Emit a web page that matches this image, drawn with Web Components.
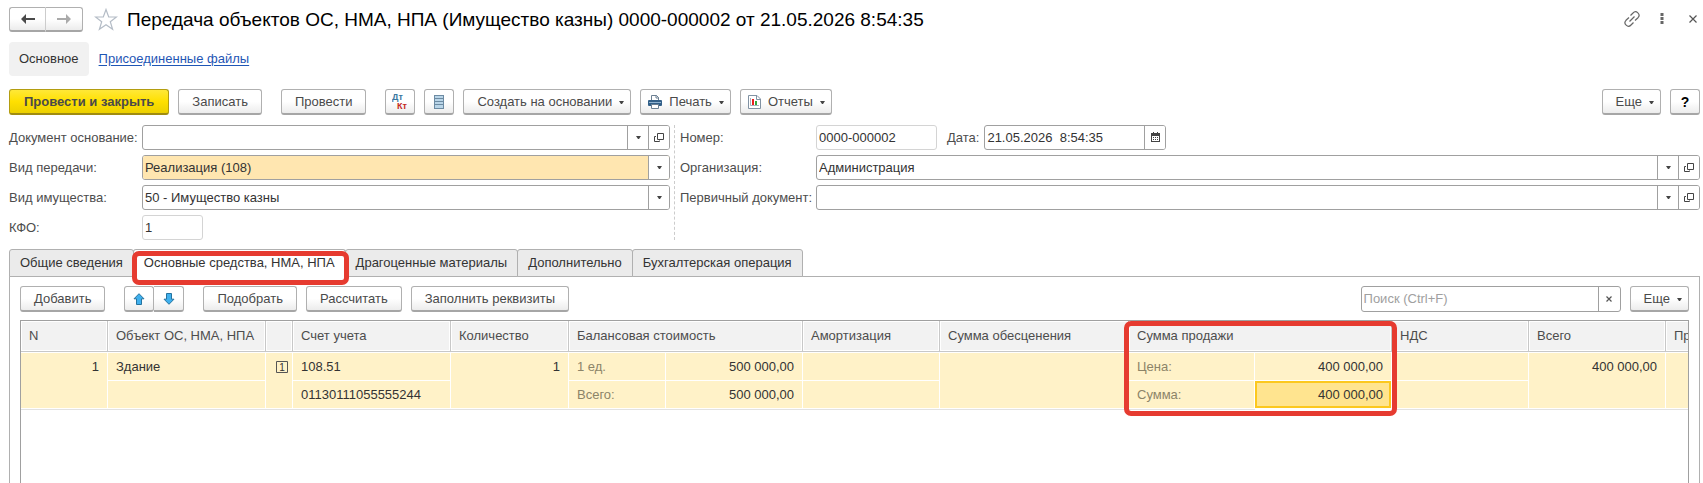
<!DOCTYPE html>
<html lang="ru">
<head>
<meta charset="utf-8">
<title>Передача объектов ОС, НМА, НПА</title>
<style>
  html, body {
    height: 100%;
    margin: 0;
  }
  body {
    overflow: hidden;
    background: #fff;
    color: #333;
    font: 13px/16px "Liberation Sans", Arial, sans-serif;
  }
  h1 {
    margin: 0;
    color: #000;
    font-size: 19px;
    line-height: 24px;
    font-weight: normal;
    white-space: nowrap;
  }
</style>
</head>
<body>
<doc-window>
  <doc-header slot="header"><h1>Передача объектов ОС, НМА, НПА (Имущество казны) 0000-000002 от 21.05.2026 8:54:35</h1></doc-header>
  <section-links slot="header"></section-links>

  <command-bar slot="header">
    <cmd-button look="main">Провести и закрыть</cmd-button>
    <cmd-button>Записать</cmd-button>
    <cmd-button apart>Провести</cmd-button>
    <cmd-button apart icon="dtkt" label="Проводки"></cmd-button>
    <cmd-button icon="list" label="Список"></cmd-button>
    <cmd-button menu>Создать на основании</cmd-button>
    <cmd-button icon="print" menu>Печать</cmd-button>
    <cmd-button icon="report" menu>Отчеты</cmd-button>
    <cmd-button slot="end" menu>Еще</cmd-button>
    <cmd-button slot="end" look="help">?</cmd-button>
  </command-bar>

  <field-columns slot="header">
    <form-field slot="left" label="Документ основание:" tools="arrow open"></form-field>
    <form-field slot="left" label="Вид передачи:" type="select" value="Реализация (108)" marked></form-field>
    <form-field slot="left" label="Вид имущества:" type="select" value="50 - Имущество казны"></form-field>
    <form-field slot="left" label="КФО:" value="1" size="small" readonly></form-field>
    <form-field slot="number" label="Номер:" value="0000-000002" size="medium" readonly></form-field>
    <form-field slot="number" label="Дата:" value="21.05.2026  8:54:35" size="date" tools="calendar"></form-field>
    <form-field slot="right" label="Организация:" value="Администрация" tools="arrow open"></form-field>
    <form-field slot="right" label="Первичный документ:" tools="arrow open"></form-field>
  </field-columns>

  <page-tabs>
    <command-bar>
      <cmd-button>Добавить</cmd-button>
      <move-buttons></move-buttons>
      <cmd-button apart>Подобрать</cmd-button>
      <cmd-button>Рассчитать</cmd-button>
      <cmd-button>Заполнить реквизиты</cmd-button>
      <search-box slot="end"></search-box>
      <cmd-button slot="end" menu>Еще</cmd-button>
    </command-bar>
    <asset-table></asset-table>
  </page-tabs>
</doc-window>

<script>
/*
*   Icons shared by the elements
*/
const icons = {
  back: '<svg width="14" height="10" viewBox="0 0 14 10"><path d="M0 5 5 0v4h9v2H5v4z" fill="#4a4a4a"/></svg>',
  forward: '<svg width="14" height="10" viewBox="0 0 14 10"><path d="M14 5 9 0v4H0v2h9v4z" fill="#aaa"/></svg>',
  star: '<svg width="24" height="23" viewBox="0 0 24 23"><path d="M12 1.5 14.7 9H22.5L16.3 13.7 18.6 21.3 12 16.7 5.4 21.3 7.7 13.7 1.5 9H9.3z" fill="none" stroke="#b4bcc6" stroke-width="1.2"/></svg>',
  link: '<svg width="16" height="16" viewBox="0 0 16 16" fill="none" stroke="#666" stroke-width="1.2"><path d="M6.500 4.500 9 2a3.300 3.300 0 0 1 5 4.700L11 9.500M9.500 11.500 7 14a3.300 3.300 0 0 1-5-4.700L5 6.500M5.500 10.500l5-5"/></svg>',
  dots: '<svg width="4" height="12" viewBox="0 0 4 12" fill="#666"><path d="M.5 0h3v3h-3zM.5 4h3v3h-3zM.5 8h3v3h-3z"/></svg>',
  close: '<svg width="8" height="8" viewBox="0 0 8 8"><path d="M.5.5l7 7M7.500.5l-7 7" stroke="#555" stroke-width="1.200"/></svg>',
  clear: '<svg width="6" height="6" viewBox="0 0 6 6"><path d="M.5.5l5 5M5.500.5l-5 5" stroke="#555" stroke-width="1.200"/></svg>',
  arrow: '<svg width="5" height="3" viewBox="0 0 5 3"><path d="M0 0h5L3 3H2z" fill="#444"/></svg>',
  open: '<svg width="10" height="10" viewBox="0 0 10 10"><path d="M3.500.5h6v6h-6zM2 3.500H.5v5h5V7.500" fill="none" stroke="#444"/></svg>',
  calendar: '<svg width="9" height="11" viewBox="0 0 9 11"><path d="M0 1h2V0h1v1h3V0h1v1h2v9H0z" fill="#444"/><path d="M1 4h7v5H1z" fill="#fff"/><path d="M2 5h1v1H2zM4 5h1v1H4zM6 5h1v1H6zM2 7h1v1H2zM4 7h1v1H4zM6 7h1v1H6z" fill="#444"/></svg>',
  list: '<svg width="10" height="14" viewBox="0 0 10 14"><path d="M0 0h10v14H0z" fill="#6d8ba3"/><path d="M1 1h8v2H1zM1 4h8v2H1zM1 7h8v2H1zM1 10h8v3H1z" fill="#b9d5e8"/></svg>',
  print: '<svg width="14" height="14" viewBox="0 0 14 14"><path d="M3.500 6V.5h5l2 2V6" fill="#fff" stroke="#6b7f92"/><path d="M8 0v3h3" fill="none" stroke="#6b7f92"/><rect y="5" width="14" height="6" rx="1" fill="#336089"/><path d="M1 7.500h12" stroke="#8fb2d0"/><path d="M3.500 9.500h7v4h-7z" fill="#fff" stroke="#6b7f92"/></svg>',
  report: '<svg width="13" height="14" viewBox="0 0 13 14"><path d="M.5.5h8.500l3.500 3.500v9.500H.5z" fill="#fff" stroke="#8192a3"/><path d="M8.500 0v4.500H13" fill="none" stroke="#8192a3"/><path d="M2.500 3v7.500H11" fill="none" stroke="#a5b1bc"/><path d="M4 4h2v6H4z" fill="#ea1f1f"/><path d="M7 6h2v4H7z" fill="#33a83c"/></svg>',
  up: '<svg width="12" height="12" viewBox="0 0 12 12"><path d="M6 .7 11 5.800H8.500v5.700h-5V5.800H1z" fill="#3fb0ee" stroke="#25739f"/></svg>',
  down: '<svg width="12" height="12" viewBox="0 0 12 12"><path d="M6 11.300 11 6.200H8.500V.5h-5v5.700H1z" fill="#3fb0ee" stroke="#25739f"/></svg>',
  dtkt: '<svg width="16" height="18" viewBox="0 0 16 18" font-family="Liberation Sans, Arial, sans-serif" font-size="9" font-weight="bold"><text x="0" y="7" fill="#3a77a0">Дт</text><text x="5" y="16" fill="#c5281c">Кт</text></svg>'
};

const buttonStyle = `
button {
  box-sizing: border-box;
  height: 26px;
  margin: 0;
  border: 1px solid #b0b0b0;
  border-bottom: 2px solid #a6a6a6;
  border-radius: 3px;
  background: linear-gradient(#fff 50%, #ececec);
  color: #4a4a4a;
  font: inherit;
  white-space: nowrap;
  cursor: pointer;
}
svg { display: block; flex: none; }
`;

// Attaches an open shadow root with the given markup
function render(el, html) {
  el.attachShadow({ mode: 'open' }).innerHTML = html;
}

class DocWindow extends HTMLElement {
  constructor() {
    super();
    render(this, `
      <style>
        :host { display: flex; flex-direction: column; height: 100vh; overflow: hidden; }
        header { display: flex; flex-direction: column; padding: 7px 3px 0 9px; }
        main { flex: 1; display: flex; min-height: 0; padding: 9px 3px 0 9px; }
        ::slotted(page-tabs) { flex: 1; }
      </style>
      <header><slot name="header"></slot></header>
      <main><slot></slot></main>
    `);
  }
}

class DocHeader extends HTMLElement {
  constructor() {
    super();
    render(this, `
      <style>
        :host { display: flex; align-items: center; height: 25px; }
        ${buttonStyle}
        .history { display: flex; margin-right: 11px; }
        .history button { display: grid; place-items: center; width: 37px; height: 25px; padding: 0; }
        .history button:first-child { border-radius: 3px 0 0 3px; border-right-color: #ccc; }
        .history button:last-child { border-left: 0; border-radius: 0 3px 3px 0; }
        .plain { display: grid; place-items: center; height: 24px; padding: 0; border: 0; background: none; }
        .star { margin-right: 9px; }
        .window { display: flex; gap: 18px; margin: -2px 3px 0 auto; align-items: center; }
        .window .plain { min-width: 8px; }
        .window .plain:nth-child(2) { margin-right: 5px; }
      </style>
      <div class="history">
        <button aria-label="Назад">${icons.back}</button>
        <button aria-label="Вперед">${icons.forward}</button>
      </div>
      <button class="plain star" aria-label="В избранное">${icons.star}</button>
      <slot></slot>
      <div class="window">
        <button class="plain" aria-label="Ссылка">${icons.link}</button>
        <button class="plain" aria-label="Меню">${icons.dots}</button>
        <button class="plain" aria-label="Закрыть">${icons.close}</button>
      </div>
    `);
  }
}

class SectionLinks extends HTMLElement {
  constructor() {
    super();
    render(this, `
      <style>
        :host { display: block; margin: 10px 0 13px; }
        nav { display: flex; align-items: center; gap: 10px; }
        span { padding: 9px 10px; border-radius: 4px; background: #f1f1f1; }
        a { color: #1f56b5; text-underline-offset: 2px; }
      </style>
      <nav><span>Основное</span><a href="#files">Присоединенные файлы</a></nav>
    `);
  }
}

class CommandBar extends HTMLElement {
  constructor() {
    super();
    render(this, `
      <style>
        :host, div { display: flex; gap: 9px; }
        :host { justify-content: space-between; }
        ::slotted([apart]) { margin-left: 10px; }
      </style>
      <div><slot></slot></div>
      <div><slot name="end"></slot></div>
    `);
  }
}

class CmdButton extends HTMLElement {
  constructor() {
    super();
    const icon = this.getAttribute('icon');
    const label = this.getAttribute('label');
    render(this, `
      <style>
        :host { display: block; }
        ${buttonStyle}
        button { display: flex; align-items: center; padding: 0 13px; }
        :host([menu]) button { padding-right: 6px; }
        :host([icon]) button { padding-left: 7px; }
        :host([icon]) .text { margin-left: 7px; }
        :host([label]) button { justify-content: center; width: 30px; padding: 0; }
        .arrow { margin: 1px 0 0 7px; }
        :host([look=main]) button {
          padding: 0 14px;
          border-color: #b39d10;
          border-bottom-color: #a08c10;
          background: linear-gradient(#ffe838, #ffe000 50%, #ecd000);
          font-weight: bold;
        }
        :host([look=help]) button { justify-content: center; width: 30px; padding: 0; color: #000; font-size: 14px; font-weight: bold; }
      </style>
      <button ${label ? `aria-label="${label}"` : ''}>
        ${icon ? icons[icon] : ''}
        ${label ? '' : '<span class="text"><slot></slot></span>'}
        ${this.hasAttribute('menu') ? `<span class="arrow">${icons.arrow}</span>` : ''}
      </button>
    `);
  }
}

class MoveButtons extends HTMLElement {
  constructor() {
    super();
    render(this, `
      <style>
        :host { display: flex; margin-left: 10px; }
        ${buttonStyle}
        button { display: grid; place-items: center; width: 30px; padding: 0; }
        button:first-child { border-radius: 3px 0 0 3px; }
        button:last-child { border-left: 0; border-radius: 0 3px 3px 0; }
      </style>
      <button aria-label="Переместить вверх">${icons.up}</button>
      <button aria-label="Переместить вниз">${icons.down}</button>
    `);
  }
}

class FieldColumns extends HTMLElement {
  constructor() {
    super();
    render(this, `
      <style>
        :host { display: grid; grid-template-columns: 661fr 1030fr; margin-top: 10px; }
        div { display: flex; flex-direction: column; gap: 5px; }
        .left { --label-width: 133px; }
        .right { --label-width: 136px; margin-left: 4px; padding-left: 5px; border-left: 1px dashed #ccc; }
        .number { flex-direction: row; gap: 10px; }
      </style>
      <div class="left"><slot name="left"></slot></div>
      <div class="right">
        <div class="number"><slot name="number"></slot></div>
        <slot name="right"></slot>
      </div>
    `);
  }
}

class FormField extends HTMLElement {
  constructor() {
    super();
    const value = this.getAttribute('value') || '';
    const tools = (this.getAttribute('tools') || '').split(' ').filter(Boolean);
    const names = { arrow: 'Выбрать', open: 'Открыть', calendar: 'Календарь' };
    const control = this.getAttribute('type') === 'select'
      ? `<select id="control"><option>${value}</option></select><span class="mark">${icons.arrow}</span>`
      : `<input id="control" type="text" value="${value}" ${this.hasAttribute('readonly') ? 'readonly' : ''}>`;

    render(this, `
      <style>
        :host { display: flex; align-items: center; }
        label { flex: none; width: var(--label-width); color: #4d4d4d; white-space: nowrap; }
        .box {
          box-sizing: border-box;
          display: grid;
          grid-template-columns: 1fr;
          grid-auto-flow: column;
          grid-auto-columns: 21px;
          flex: 1;
          height: 25px;
          overflow: hidden;
          border: 1px solid #a0a0a0;
          border-radius: 3px;
          background: #fff;
        }
        input, select {
          appearance: none;
          box-sizing: border-box;
          grid-area: 1 / 1;
          min-width: 0;
          margin: 0;
          padding: 0 2px;
          border: 0;
          outline: 0;
          background: none;
          color: #333;
          font: inherit;
          white-space: pre;
        }
        select { grid-area: 1 / 1 / 2 / 3; }
        .mark { grid-area: 1 / 2; pointer-events: none; }
        .mark, button {
          display: grid;
          place-items: center;
          padding: 0;
          border: 0;
          border-left: 1px solid #a0a0a0;
          background: #fff;
        }
        :host([marked]) select { background: #ffe6b0; }
        :host([readonly]) .box { border-color: #d4d4d4; }
        :host([size]) .box { flex: none; }
        :host([size=small]) .box { width: 61px; }
        :host([size=medium]) .box { width: 121px; }
        :host([size=date]) .box { width: 182px; }
        :host([size=date]) label { width: auto; margin-right: 5px; }
      </style>
      <label for="control">${this.getAttribute('label')}</label>
      <div class="box">
        ${control}
        ${tools.map(t => `<button aria-label="${names[t]}">${icons[t]}</button>`).join('')}
      </div>
    `);
  }
}

class SearchBox extends HTMLElement {
  constructor() {
    super();
    render(this, `
      <style>
        :host { display: flex; box-sizing: border-box; width: 260px; height: 26px; border: 1px solid #a0a0a0; border-radius: 3px; }
        input { flex: 1; min-width: 0; padding: 0 2px; border: 0; outline: 0; background: none; font: inherit; }
        input::placeholder { color: #a0a0a0; }
        button { display: grid; place-items: center; width: 22px; padding: 0; border: 0; border-left: 1px solid #a0a0a0; background: none; }
      </style>
      <input type="text" aria-label="Поиск" placeholder="Поиск (Ctrl+F)">
      <button aria-label="Очистить">${icons.clear}</button>
    `);
  }
}

class PageTabs extends HTMLElement {
  constructor() {
    super();
    render(this, `
      <style>
        :host { display: flex; flex-direction: column; min-width: 0; }
        .tabs { display: flex; position: relative; z-index: 1; }
        button {
          position: relative;
          height: 28px;
          margin: 0 0 -1px -1px;
          padding: 0 10px;
          border: 1px solid #b0b0b0;
          border-radius: 3px 3px 0 0;
          background: #ebebeb;
          color: #333;
          font: inherit;
          white-space: nowrap;
        }
        button:first-child { margin-left: 0; }
        button[aria-selected=true] { z-index: 1; border-bottom-color: #fff; background: #fff; }
        /* highlight frame around the open tab */
        button[aria-selected=true]::after {
          content: "";
          position: absolute;
          inset: 1px -4px -9px -2px;
          border: 5px solid #e63b30;
          border-radius: 7px;
        }
        .panel {
          flex: 1;
          display: flex;
          flex-direction: column;
          gap: 8px;
          min-height: 0;
          padding: 9px 10px 0;
          border: 1px solid #b0b0b0;
          border-bottom: 0;
        }
        ::slotted(asset-table) { flex: 1; }
      </style>
      <div class="tabs" role="tablist">
        <button role="tab">Общие сведения</button>
        <button role="tab" aria-selected="true">Основные средства, НМА, НПА</button>
        <button role="tab">Драгоценные материалы</button>
        <button role="tab">Дополнительно</button>
        <button role="tab">Бухгалтерская операция</button>
      </div>
      <div class="panel"><slot></slot></div>
    `);
  }
}

class AssetTable extends HTMLElement {
  constructor() {
    super();
    const widths = [87, 158, 27, 158, 118, 97, 137, 137, 189, 126, 137, 137, 137, 137];
    render(this, `
      <style>
        :host { display: block; min-height: 0; overflow: hidden; border: 1px solid #a0a0a0; border-bottom: 0; }
        table { width: 0; table-layout: fixed; border-collapse: separate; border-spacing: 0; }
        th, td { box-sizing: border-box; padding: 0 8px; overflow: hidden; white-space: nowrap; }
        th {
          position: relative;
          height: 31px;
          border-right: 1px solid #c8c8c8;
          border-bottom: 1px solid #c8c8c8;
          background: #f2f2f2;
          box-shadow: inset 0 0 0 1px #fff;
          color: #4d4d4d;
          font-weight: normal;
          text-align: left;
        }
        td { height: 28px; border-right: 1px solid #fff; border-bottom: 1px solid #fff; background: #fff2c8; }
        tbody tr:first-child td { height: 29px; border-top: 1px solid #fff; }
        tbody tr:first-child td[rowspan] { padding-bottom: 28px; }
        tbody tr:last-child td, td[rowspan] { box-shadow: 0 1px #e2e2e2; }
        .num { text-align: right; }
        .hint { color: #8c8468; }
        td.icon { padding: 0 5px 0 10px; }
        .current { background: #ffe48f; box-shadow: inset 0 0 0 2px #fcc81e !important; }
        .framed { overflow: visible; z-index: 1; }
        /* highlight frame around the sale amounts */
        .framed::after {
          content: "";
          position: absolute;
          inset: 0 -6px -65px -5px;
          border: 5px solid #e63b30;
          border-radius: 7px;
        }
        .badge { display: block; }
      </style>
      <table>
        <colgroup>${widths.map(w => `<col style="width: ${w}px">`).join('')}</colgroup>
        <thead>
          <tr>
            <th>N</th>
            <th>Объект ОС, НМА, НПА</th>
            <th></th>
            <th>Счет учета</th>
            <th>Количество</th>
            <th colspan="2">Балансовая стоимость</th>
            <th>Амортизация</th>
            <th>Сумма обесценения</th>
            <th colspan="2" class="framed">Сумма продажи</th>
            <th>НДС</th>
            <th>Всего</th>
            <th>Пр</th>
          </tr>
        </thead>
        <tbody>
          <tr>
            <td rowspan="2" class="num">1</td>
            <td>Здание</td>
            <td rowspan="2" class="icon">
              <svg class="badge" width="12" height="12" viewBox="0 0 12 12"><path d="M.5.5h11v11H.5z" fill="none" stroke="#555"/><text x="6" y="10" text-anchor="middle" font-size="10" fill="#333">1</text></svg>
            </td>
            <td>108.51</td>
            <td rowspan="2" class="num">1</td>
            <td class="hint">1 ед.</td>
            <td class="num">500 000,00</td>
            <td></td>
            <td rowspan="2"></td>
            <td class="hint">Цена:</td>
            <td class="num">400 000,00</td>
            <td></td>
            <td rowspan="2" class="num">400 000,00</td>
            <td rowspan="2"></td>
          </tr>
          <tr>
            <td></td>
            <td>01130111055555244</td>
            <td class="hint">Всего:</td>
            <td class="num">500 000,00</td>
            <td></td>
            <td class="hint">Сумма:</td>
            <td class="num current">400 000,00</td>
            <td></td>
          </tr>
        </tbody>
      </table>
    `);
  }
}

// Here the elements are registered
customElements.define('doc-window', DocWindow);
customElements.define('doc-header', DocHeader);
customElements.define('section-links', SectionLinks);
customElements.define('command-bar', CommandBar);
customElements.define('cmd-button', CmdButton);
customElements.define('move-buttons', MoveButtons);
customElements.define('field-columns', FieldColumns);
customElements.define('form-field', FormField);
customElements.define('search-box', SearchBox);
customElements.define('page-tabs', PageTabs);
customElements.define('asset-table', AssetTable);
</script>
</body>
</html>
